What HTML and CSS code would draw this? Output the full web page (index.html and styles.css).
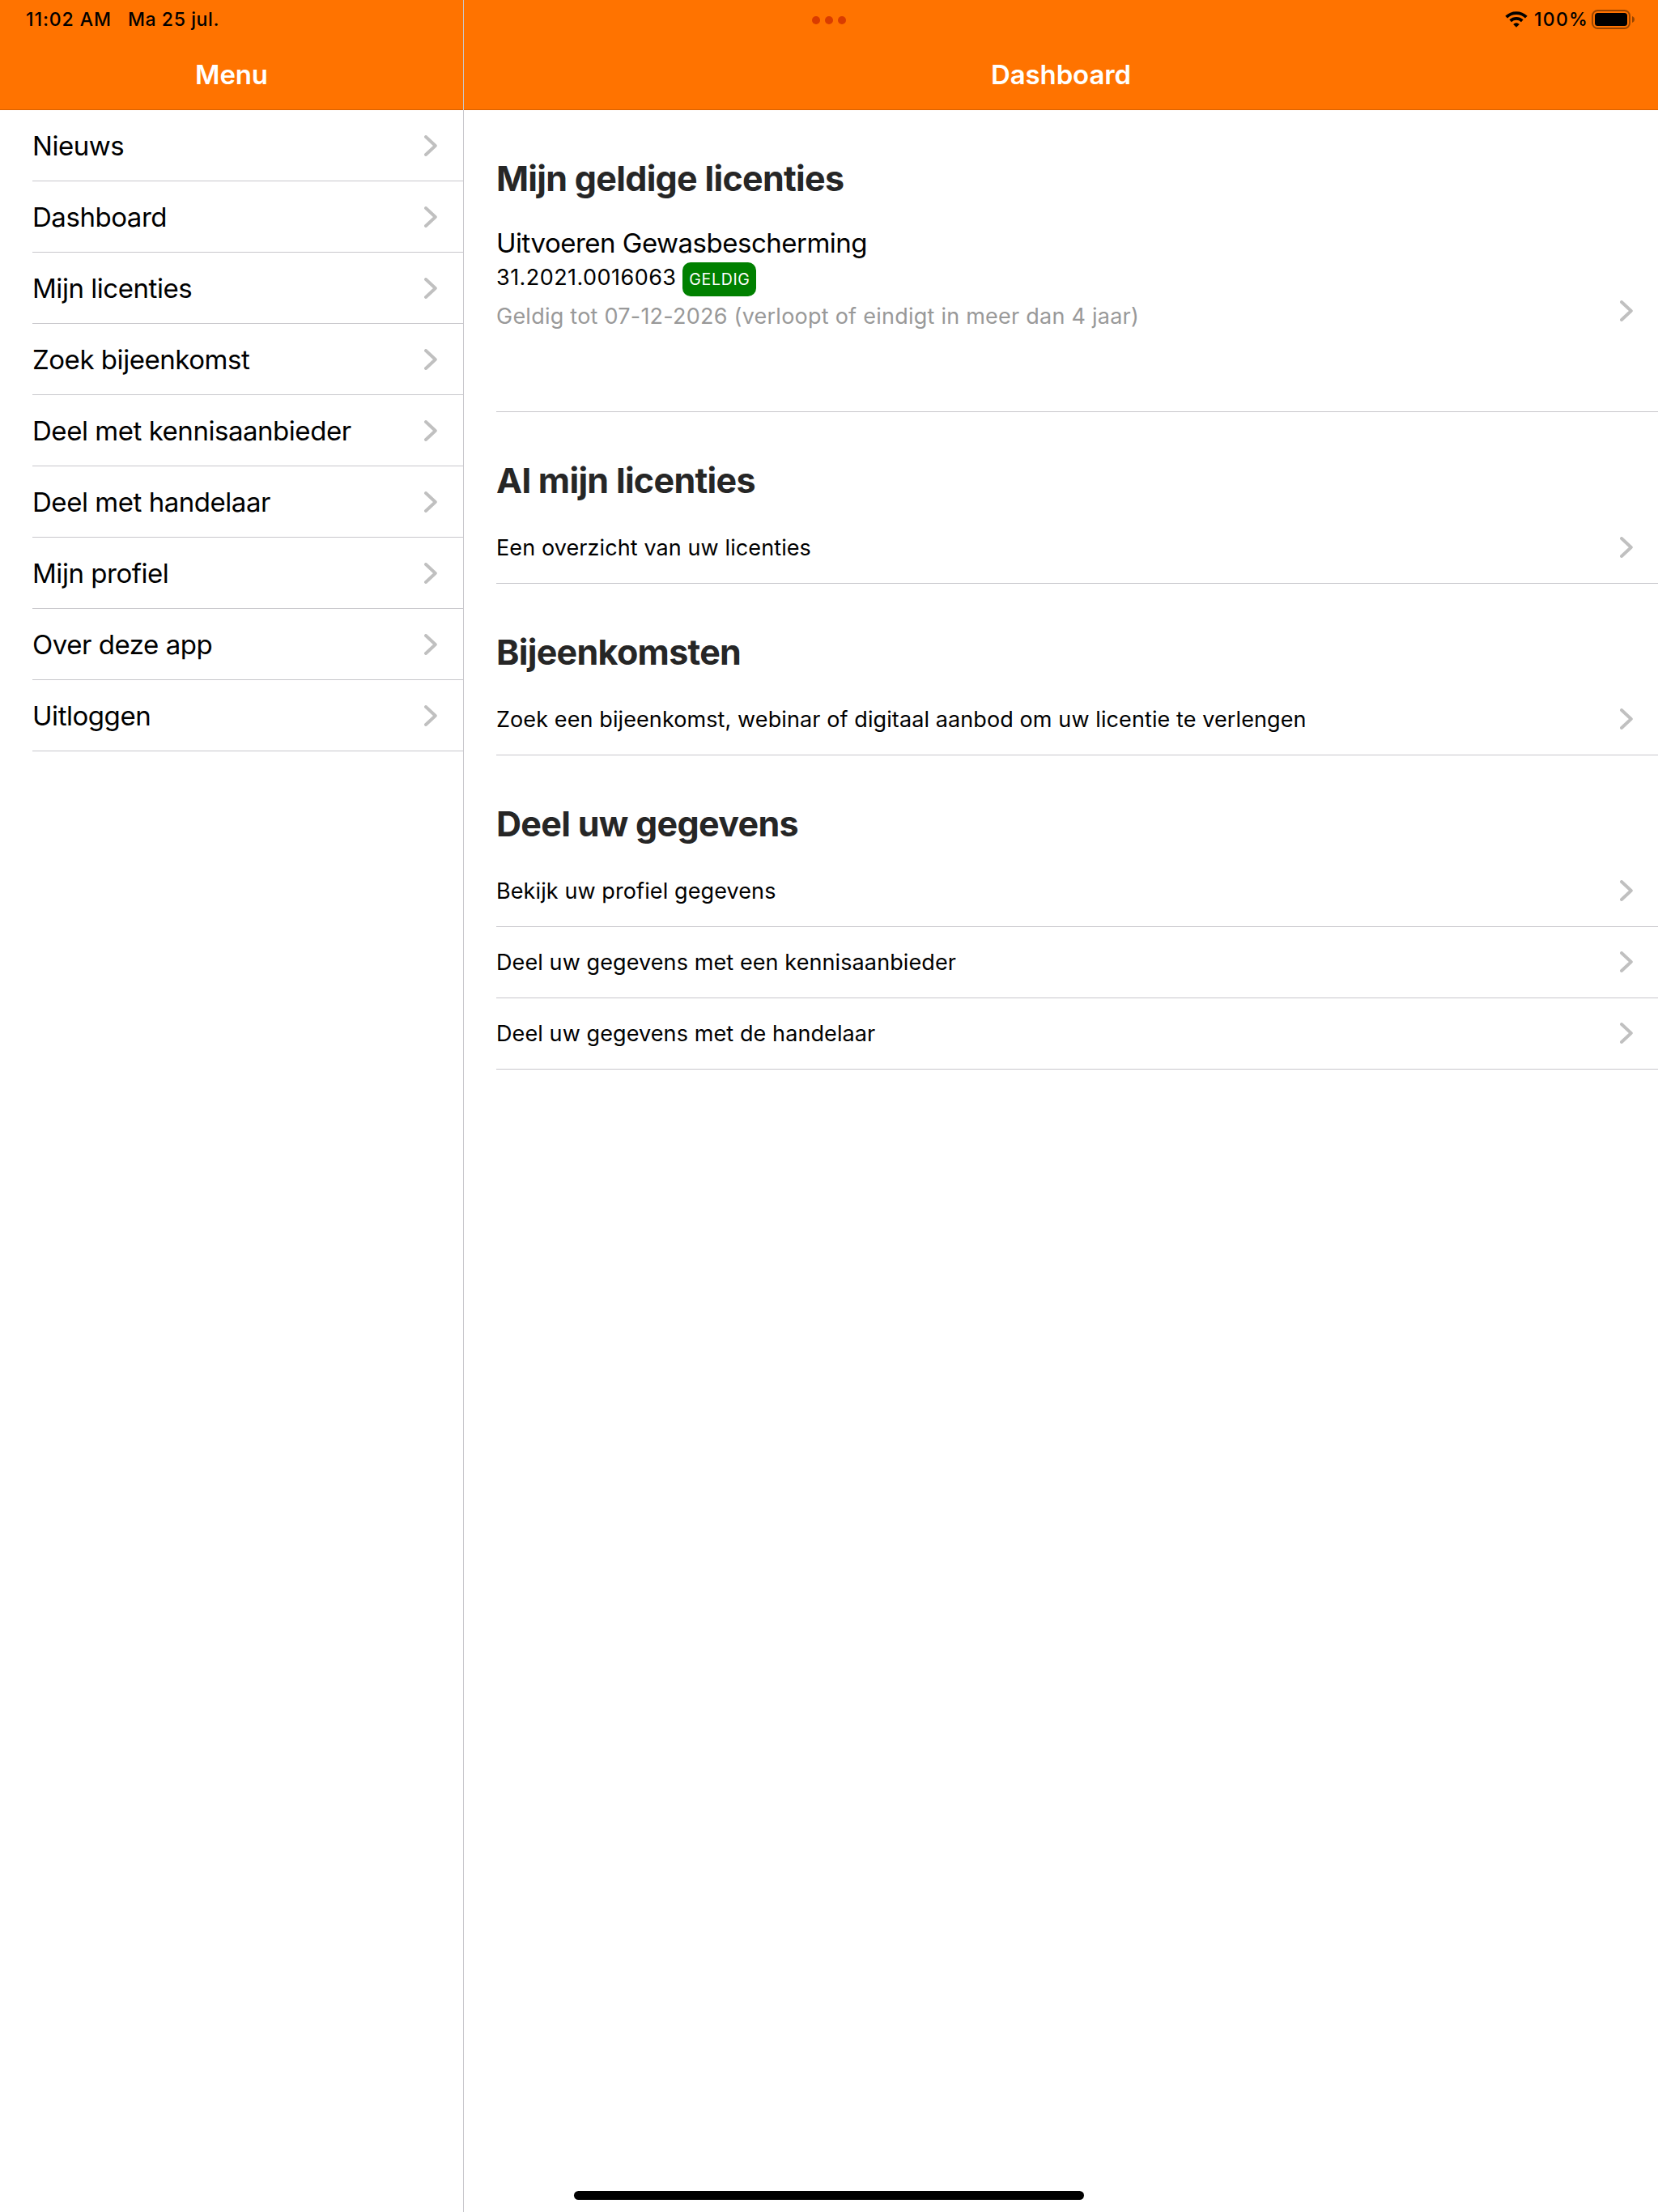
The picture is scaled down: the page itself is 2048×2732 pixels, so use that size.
FILE: index.html
```
<!DOCTYPE html>
<html lang="nl">
<head>
<meta charset="utf-8">
<title>Dashboard</title>
<link rel="stylesheet" href="styles.css">
</head>
<body>
<svg class="defs" aria-hidden="true">
  <symbol id="chevron" viewBox="0 0 16 26"><path d="M2 2l11.8 11L2 24" fill="none" stroke="currentColor" stroke-width="3.9" stroke-linecap="round" stroke-linejoin="round"/></symbol>
</svg>
<div class="app">
  <div class="status">
    <div class="status-left">
      <span class="time">11:02 AM</span>
      <span class="date">Ma 25 jul.</span>
    </div>
    <div class="dots"><i></i><i></i><i></i></div>
    <div class="status-right">
      <svg class="wifi" viewBox="0 0 28 20" width="28" height="20">
        <path d="M1.7 7.2a17.5 17.5 0 0 1 24.6 0M6.7 11.7a10.8 10.8 0 0 1 14.6 0" fill="none" stroke="#000" stroke-width="3.9"/>
        <path d="M10.2 15.9Q14 12.4 17.8 15.9L14 19.8z"/>
      </svg>
      <span class="percent">100%</span>
      <svg class="battery" viewBox="0 0 54 24" width="54" height="24">
        <rect x="1" y="1" width="46" height="22" rx="6.5" fill="none" stroke="#000" stroke-opacity=".4" stroke-width="2"/>
        <rect x="4" y="4" width="40" height="16" rx="3.5"/>
        <path d="M50 8q3 1.2 3 4t-3 4z" fill-opacity=".4"/>
      </svg>
    </div>
  </div>

  <aside class="sidebar">
    <header class="navbar">Menu</header>
    <nav class="list menu">
      <a class="row"><span>Nieuws</span><svg class="chevron"><use href="#chevron"/></svg></a>
      <a class="row"><span>Dashboard</span><svg class="chevron"><use href="#chevron"/></svg></a>
      <a class="row"><span>Mijn licenties</span><svg class="chevron"><use href="#chevron"/></svg></a>
      <a class="row"><span>Zoek bijeenkomst</span><svg class="chevron"><use href="#chevron"/></svg></a>
      <a class="row"><span>Deel met kennisaanbieder</span><svg class="chevron"><use href="#chevron"/></svg></a>
      <a class="row"><span>Deel met handelaar</span><svg class="chevron"><use href="#chevron"/></svg></a>
      <a class="row"><span>Mijn profiel</span><svg class="chevron"><use href="#chevron"/></svg></a>
      <a class="row"><span>Over deze app</span><svg class="chevron"><use href="#chevron"/></svg></a>
      <a class="row"><span>Uitloggen</span><svg class="chevron"><use href="#chevron"/></svg></a>
    </nav>
  </aside>

  <main class="content">
    <header class="navbar">Dashboard</header>
    <section class="list">
      <h2>Mijn geldige licenties</h2>
      <a class="row license">
        <div class="details">
          <div class="license-name">Uitvoeren Gewasbescherming</div>
          <div class="license-number"><span>31.2021.0016063</span><b class="badge">GELDIG</b></div>
          <div class="validity">Geldig tot 07-12-2026 (verloopt of eindigt in meer dan 4 jaar)</div>
        </div>
        <svg class="chevron"><use href="#chevron"/></svg>
      </a>
    </section>
    <section class="list">
      <h2>Al mijn licenties</h2>
      <a class="row"><span>Een overzicht van uw licenties</span><svg class="chevron"><use href="#chevron"/></svg></a>
    </section>
    <section class="list">
      <h2>Bijeenkomsten</h2>
      <a class="row"><span>Zoek een bijeenkomst, webinar of digitaal aanbod om uw licentie te verlengen</span><svg class="chevron"><use href="#chevron"/></svg></a>
    </section>
    <section class="list">
      <h2>Deel uw gegevens</h2>
      <a class="row"><span>Bekijk uw profiel gegevens</span><svg class="chevron"><use href="#chevron"/></svg></a>
      <a class="row"><span>Deel uw gegevens met een kennisaanbieder</span><svg class="chevron"><use href="#chevron"/></svg></a>
      <a class="row"><span>Deel uw gegevens met de handelaar</span><svg class="chevron"><use href="#chevron"/></svg></a>
    </section>
  </main>
  <div class="home-indicator"></div>
</div>
</body>
</html>
```
FILE: styles.css
```
* { box-sizing: border-box; }

body {
  margin: 0;
  background: #fff;
  color: #000;
  font-family: Inter, "Liberation Sans", sans-serif;
}

.defs { display: none; }

.app {
  position: relative;
  display: grid;
  grid-template-columns: 573px 1fr;
  height: 2732px;
  overflow: hidden;
}

/* Status bar, laid over both navigation bars */
.status {
  position: absolute;
  top: 0;
  left: 0;
  right: 0;
  height: 48px;
  padding: 0 28px 0 32px;
  display: grid;
  grid-template-columns: 1fr auto 1fr;
  align-items: center;
  font-size: 23px;
  font-weight: 500;
  line-height: 48px;
}
.status-left { display: flex; gap: 20px; }
.time { letter-spacing: .92px; }
.date { letter-spacing: .6px; }
.percent { letter-spacing: 1.2px; }
.dots {
  display: flex;
  gap: 6px;
  padding-top: 2px;
  margin-right: 4px;
}
.dots i {
  width: 10px;
  height: 10px;
  border-radius: 50%;
  background: #d93c00;
}
.status-right {
  display: flex;
  justify-content: flex-end;
  align-items: center;
}
.wifi { margin-right: 8px; }
.battery { margin-left: 4px; }

.sidebar { border-right: 1px solid #c8c7cc; }

.navbar {
  height: 136px;
  padding-top: 48px;
  background: #ff7300;
  border-bottom: 1px solid #d96100;
  color: #fff;
  font-size: 33px;
  font-weight: 600;
  line-height: 88px;
  letter-spacing: -.12px;
  text-align: center;
}

.list { padding-left: 40px; }

.list h2 {
  margin: 0;
  height: 124px;
  padding-top: 58px;
  color: #262626;
  font-size: 43px;
  font-weight: 700;
  line-height: 53px;
  letter-spacing: -.69px;
}

.row {
  display: flex;
  justify-content: space-between;
  align-items: center;
  height: 88px;
  padding-right: 31px;
  border-bottom: 1px solid #c8c7cc;
  font-size: 27px;
  line-height: 40px;
  letter-spacing: .1px;
  white-space: nowrap;
}
.menu .row {
  padding-top: 1px;
  padding-right: 32px;
  font-size: 33px;
  letter-spacing: -.46px;
}

.chevron {
  width: 16px;
  height: 26px;
  color: #c0c0c0;
}
.content .chevron { margin-bottom: 1px; }

.license { height: 249px; }
.details {
  align-self: flex-start;
  padding-top: 20px;
}
.license-name {
  font-size: 33px;
  letter-spacing: -.5px;
}
.license-number {
  display: flex;
  gap: 8px;
  margin: 4px 0 3px;
  line-height: 38px;
  letter-spacing: .45px;
}
.badge {
  width: 91px;
  height: 42px;
  border-radius: 10px;
  background: #008000;
  color: #fff;
  font-size: 19.5px;
  font-weight: 400;
  line-height: 42px;
  letter-spacing: .68px;
  text-align: center;
}
.validity {
  color: #999;
  line-height: 44px;
  letter-spacing: .24px;
}

.home-indicator {
  position: absolute;
  left: 709px;
  bottom: 15px;
  width: 630px;
  height: 11px;
  border-radius: 6px;
  background: #000;
}
```
